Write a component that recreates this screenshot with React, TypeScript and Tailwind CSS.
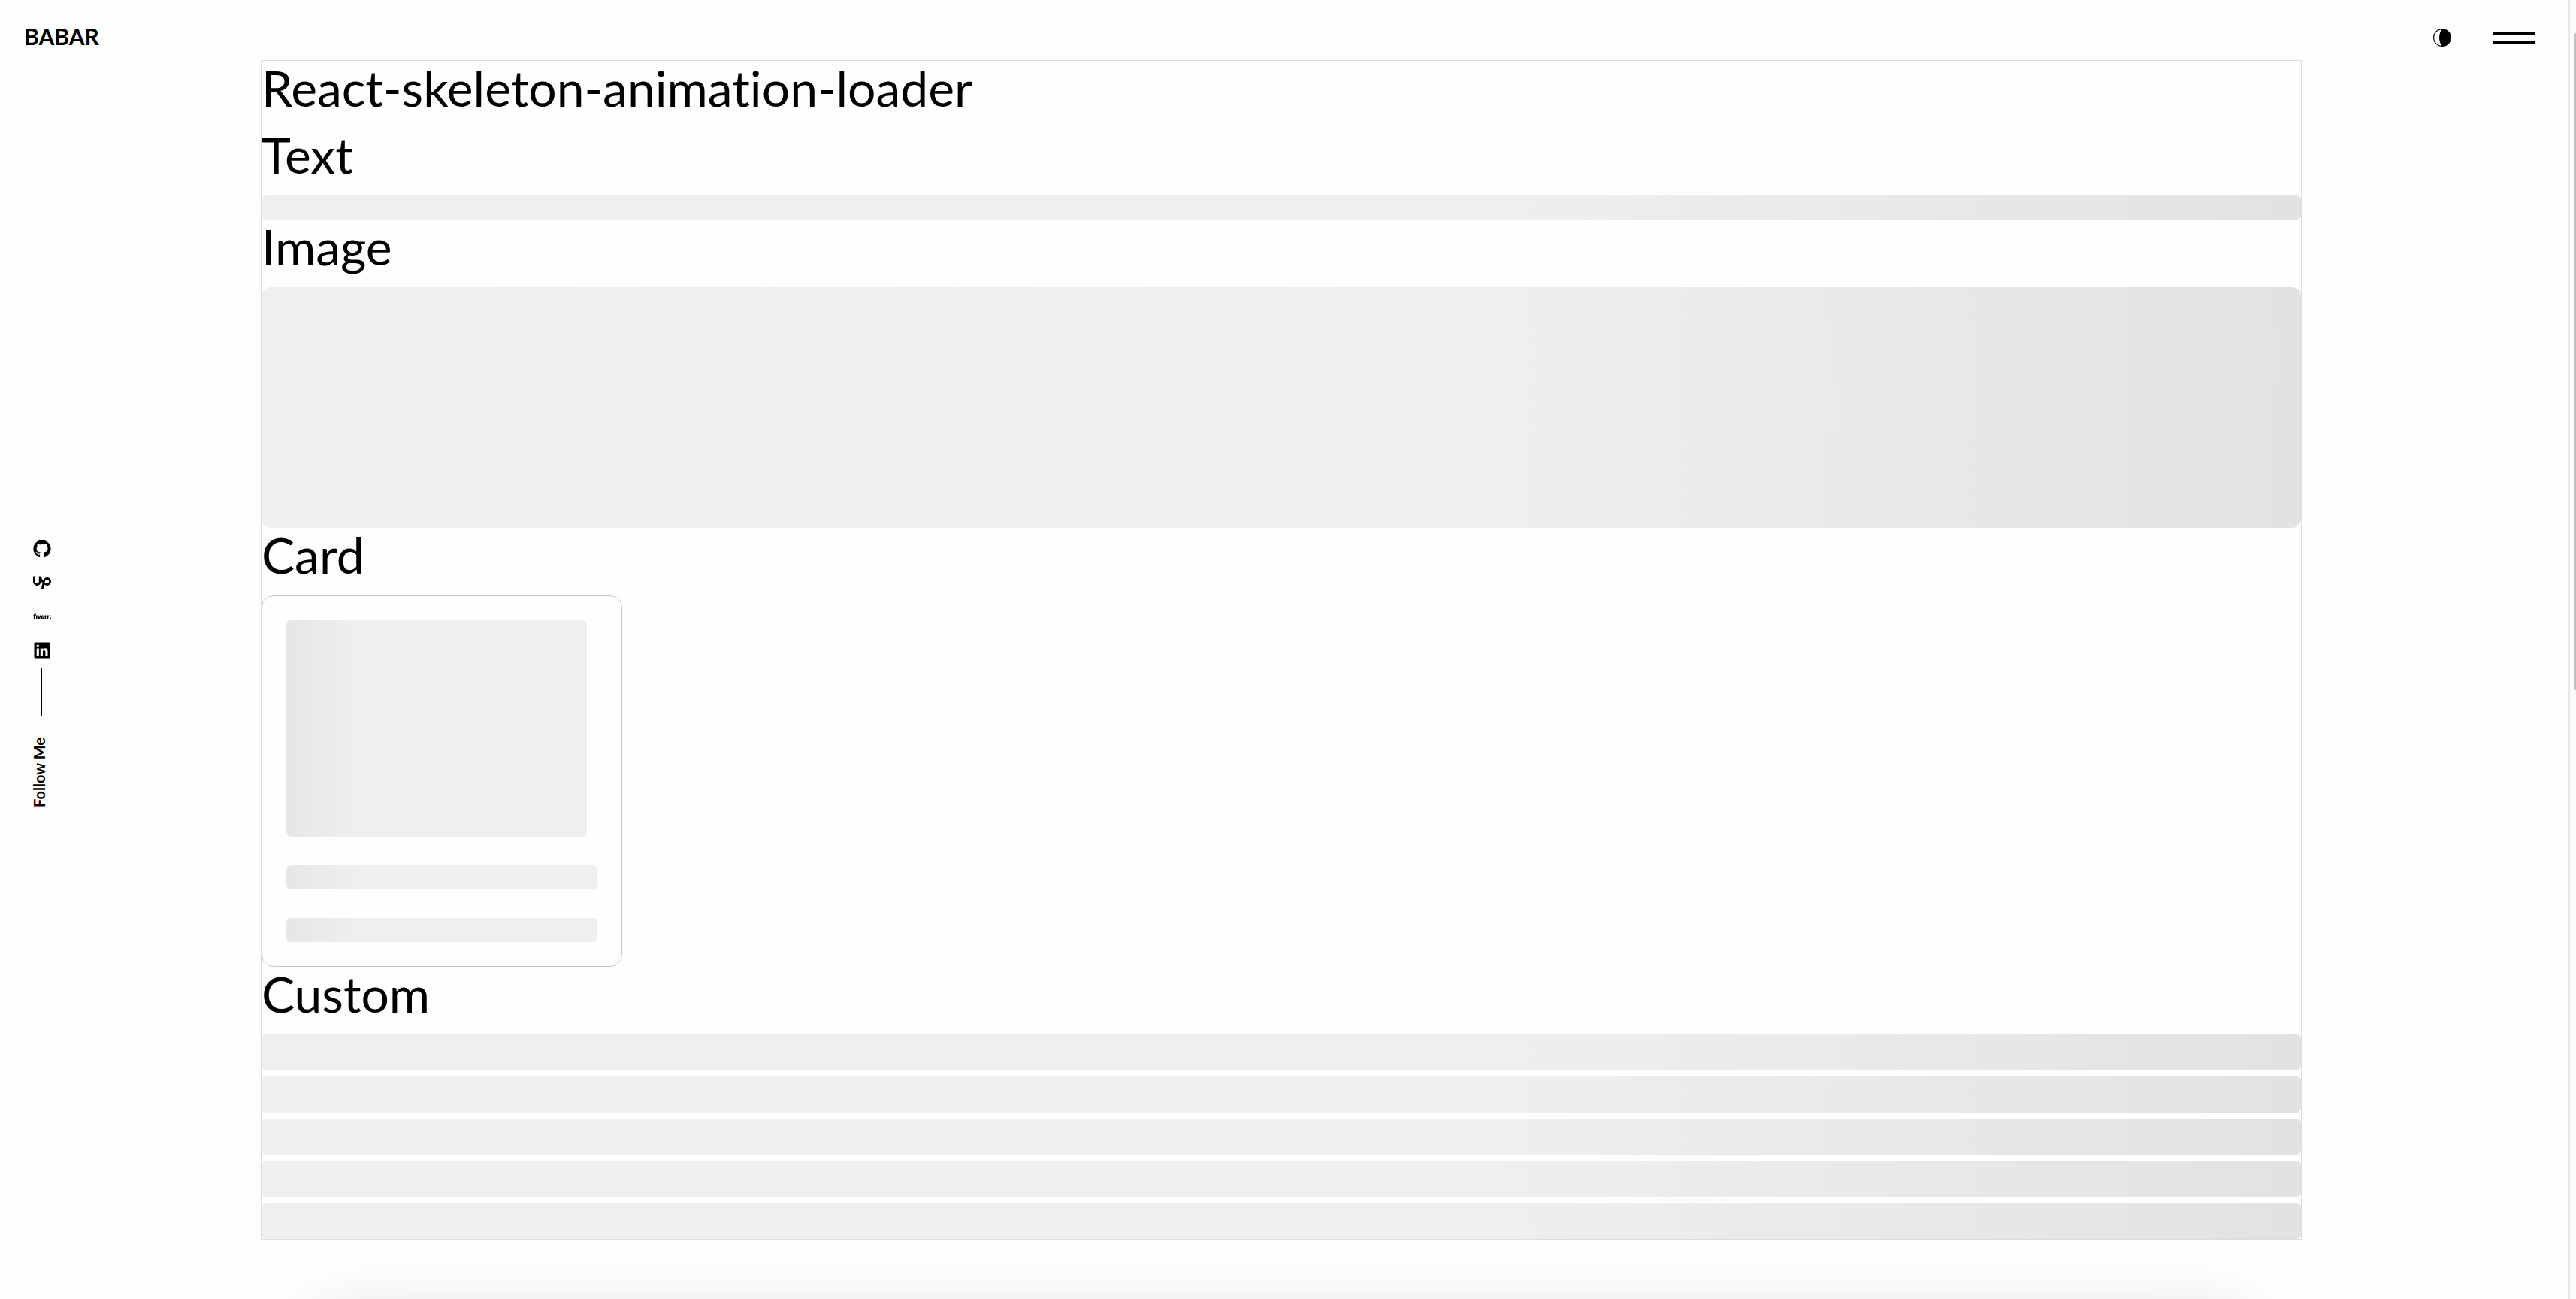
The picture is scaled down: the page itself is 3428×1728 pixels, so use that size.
import { FaGithub, FaLinkedin } from "react-icons/fa";
import { SiFiverr, SiUpwork } from "react-icons/si";

const wide = "bg-linear-to-r from-[#efefef] from-60% to-[#e2e2e2]";
const narrow = "bg-linear-to-r from-[#e7e7e7] from-3% to-[#efefef] to-24%";

function Heading({ children }: { children: string }) {
  return <h2 className="pb-[18px] text-[66px] leading-[72px]">{children}</h2>;
}

function MoonIcon() {
  return (
    <svg viewBox="0 0 24 24" className="size-6" aria-hidden="true">
      <circle cx="12" cy="12" r="11.4" fill="none" stroke="black" strokeWidth="1.2" />
      <path d="M11.5 0.5 Q8 6 8 12 Q8 18 11.5 23.5 A11.5 11.5 0 1 0 11.5 0.5Z" />
    </svg>
  );
}

const links = [
  { label: "GitHub", Icon: FaGithub },
  { label: "Upwork", Icon: SiUpwork },
  { label: "Fiverr", Icon: SiFiverr },
  { label: "LinkedIn", Icon: FaLinkedin },
];

export default function App() {
  return (
    <div className="flex h-screen overflow-hidden bg-[#fefefe] font-['Lato',sans-serif] text-black [font-variant-ligatures:none]">
      <div className="flex min-w-0 flex-1 flex-col">
        <header className="flex h-20 shrink-0 items-center justify-between pt-4 pr-11 pl-8">
          <a href="#" className="text-[30px] leading-10 font-bold">
            BABAR
          </a>
          <div className="flex items-center gap-14 pt-1">
            <button aria-label="Toggle theme">
              <MoonIcon />
            </button>
            <button aria-label="Menu" className="flex w-14 flex-col gap-2">
              <span className="h-1 w-full bg-black" />
              <span className="h-1 w-full bg-black" />
            </button>
          </div>
        </header>
        <div className="flex flex-1">
          <aside className="flex w-[347px] shrink-0 flex-col items-start pt-[638px] pl-11">
            <nav className="flex w-6 flex-col items-center gap-[21px]">
              {links.map(({ label, Icon }) => (
                <a key={label} href="#" aria-label={label}>
                  <Icon className="size-6" />
                </a>
              ))}
            </nav>
            <div className="mt-3 ml-[10px] h-16 w-0.5 bg-black" />
            <p className="mt-7 rotate-180 text-[20px] leading-4 font-bold [writing-mode:vertical-rl]">
              Follow Me
            </p>
          </aside>
          <div className="mr-[355px] min-w-0 flex-1">
            <main className="border border-[#dcdcdc]">
              <h1 className="pb-[17px] text-[66px] leading-[72px]">
                React-skeleton-animation-loader
              </h1>
              <Heading>Text</Heading>
              <div className={`h-8 rounded-md ${wide}`} />
              <Heading>Image</Heading>
              <div className={`h-80 rounded-xl ${wide}`} />
              <Heading>Card</Heading>
              <div className="w-[480px] rounded-2xl border border-[#c8c8c8] p-8">
                <div className={`h-72 w-[400px] rounded-md ${narrow}`} />
                <div className={`mt-[38px] h-8 rounded-md ${narrow}`} />
                <div className={`mt-[38px] h-8 rounded-md ${narrow}`} />
              </div>
              <Heading>Custom</Heading>
              <div className="flex flex-col gap-2">
                {[1, 2, 3, 4, 5].map((n) => (
                  <div key={n} className={`h-12 rounded-md ${wide}`} />
                ))}
              </div>
            </main>
            <div className="mx-20 mt-[120px] h-40 rounded-3xl shadow-[0_0_100px_rgba(0,0,0,0.22)]" />
          </div>
        </div>
      </div>
      <div className="w-[10px] shrink-0 border-l-2 border-[#e8e8e8] bg-[#fafafa] pt-11 pl-1.5">
        <div className="h-[874px] rounded-l-full bg-[#c1c1c1]" />
      </div>
    </div>
  );
}
